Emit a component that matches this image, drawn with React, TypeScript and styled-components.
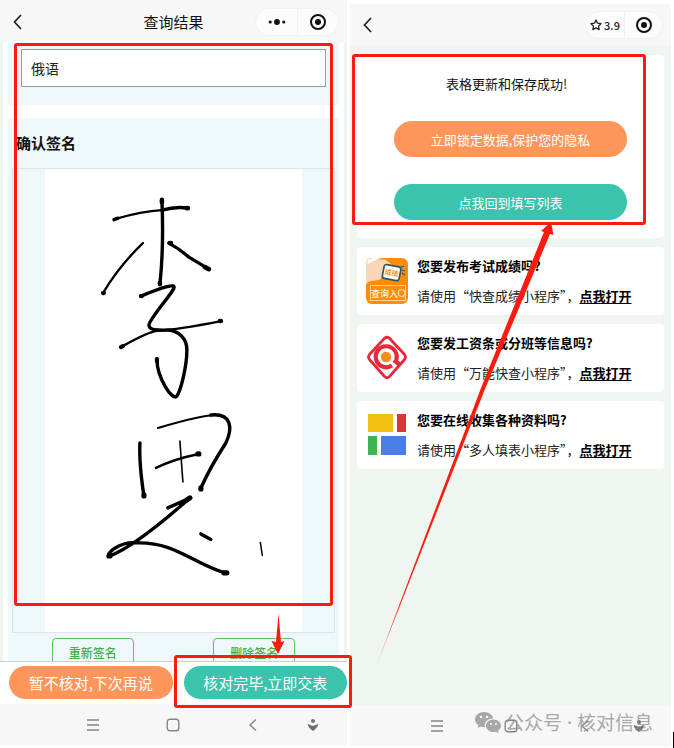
import React from 'react';
import styled, { createGlobalStyle } from 'styled-components';

const RED = '#ff1a0e';

const GlobalStyle = createGlobalStyle`
  * { box-sizing: border-box; }
  body {
    margin: 0;
    background: #fff;
    color: #111;
    font-family: "Noto Sans CJK SC", "Noto Sans", sans-serif;
  }
  button, input { font-family: inherit; }
  h1, h2, p { margin: 0; }
`;

const Page = styled.main`
  position: relative;
  display: grid;
  grid-template-columns: 347fr 321fr;
  gap: 3px;
  padding-right: 3px;
  height: 100vh;
  min-height: 600px;
  overflow: hidden;
`;

const Phone = styled.section<{ $top?: number; $bottom: number }>`
  position: relative;
  display: flex;
  flex-direction: column;
  min-width: 0;
  min-height: 0;
  margin: ${p => p.$top ?? 0}px 0 ${p => p.$bottom}px;
`;

const TopBar = styled.header<{ $height: number }>`
  display: grid;
  grid-template-columns: 1fr auto 1fr;
  align-items: center;
  flex: none;
  height: ${p => p.$height}px;
  padding: 0 8px;
  background: #f7f7f7;
`;

const Title = styled.h1`
  font-size: 15px;
  line-height: 20px;
  font-weight: 400;
`;

const IconButton = styled.button`
  display: flex;
  align-items: center;
  justify-content: center;
  padding: 0;
  border: 0;
  background: none;
  color: inherit;
`;

const BackButton = styled(IconButton)`
  justify-self: start;
  padding: 0 4px;
`;

const Capsule = styled.div<{ $width: number }>`
  justify-self: end;
  grid-column: 3;
  display: grid;
  grid-template-columns: 1fr 1fr;
  width: ${p => p.$width}px;
  height: 28px;
  border: 1px solid #f2f2f2;
  border-radius: 14px;
  background: #fcfcfc;

  button + button { border-left: 1px solid #f0f0f0; }
`;

const Rating = styled(IconButton)`
  gap: 2px;
  color: #222;
  font-size: 11px;
  font-weight: 500;
`;

const FormScroll = styled.div`
  position: relative;
  flex: 1;
  min-height: 0;
  overflow: hidden;
  display: flex;
  flex-direction: column;
  gap: 13px;
  padding: 0 5px;
  border: solid #eff6f0;
  border-width: 0 3px;
`;

const FieldPanel = styled.div`
  flex: none;
  padding: 6px 13px 18px;
  border-radius: 0 0 3px 3px;
  background: #eef7f9;
`;

const TextField = styled.input`
  display: block;
  width: 100%;
  height: 38px;
  padding: 0 9px;
  border: 1px solid #959b9e;
  border-radius: 0;
  background: #fff;
  color: #222;
  font-size: 14px;
`;

const SignPanel = styled.div`
  flex: none;
  padding: 0 4px;
  border-radius: 3px;
  background: #eef7f9;
`;

const SignHeading = styled.h2`
  padding: 14px 4px 15px;
  font-size: 15px;
  line-height: 21px;
  font-weight: 700;
`;

const SignArea = styled.div`
  display: flex;
  justify-content: center;
  height: 465px;
  border: 1px solid #dde4e6;
`;

const SignCanvas = styled.div`
  width: 80%;
  background: #fff;

  svg { display: block; width: 100%; height: 100%; }
`;

const SignActions = styled.div`
  display: flex;
  justify-content: space-around;
  padding: 5px 0;
`;

const OutlineButton = styled.button`
  width: 82px;
  height: 28px;
  padding: 0;
  border: 1px solid #62bf66;
  border-radius: 4px;
  background: transparent;
  color: #43ad48;
  font-size: 12px;
  font-weight: 500;
`;

const SubmitBar = styled.div`
  position: relative;
  flex: none;
  display: flex;
  gap: 11px;
  padding: 4px 0 5px 9px;
  border-top: 1px solid #c9d0cf;
  background: #fff;
`;

const PillButton = styled.button<{ $tone: 'orange' | 'teal'; $large?: boolean }>`
  flex: ${p => (p.$large ? 1 : 'none')};
  width: 100%;
  min-width: 0;
  height: ${p => (p.$large ? 33 : 36)}px;
  padding: 0;
  border: 0;
  border-radius: 18px;
  background: ${p => (p.$tone === 'orange' ? '#fe965c' : '#3bc3ae')};
  color: #fff;
  font-size: ${p => (p.$large ? 15 : 13)}px;
`;

const SystemNav = styled.nav<{ $columns: string; $start: number }>`
  flex: none;
  display: grid;
  grid-template-columns: ${p => p.$columns};
  padding: 0 15px 0 ${p => p.$start}px;
  height: 41px;
  background: #f7f7f7;
  color: #858585;
`;

const ResultBody = styled.div`
  position: relative;
  flex: 1;
  min-height: 0;
  display: flex;
  flex-direction: column;
  gap: 9px;
  padding: 9px 7px;
  background: #eff6f0;
`;

const SuccessCard = styled.div`
  display: flex;
  flex-direction: column;
  align-items: center;
  gap: 27px;
  padding: 19px 37px 18px;
  border-radius: 4px;
  background: #fff;
`;

const SuccessText = styled.p`
  padding-right: 8px;
  font-size: 13px;
  line-height: 20px;
`;

const PromoCard = styled.article`
  display: grid;
  grid-template-columns: 44px 1fr;
  gap: 8px;
  align-items: center;
  height: 68px;
  padding: 0 8px;
  border-radius: 4px;
  background: #fff;

  svg { display: block; }
`;

const PromoText = styled.div`
  display: grid;
  gap: 10px;
  font-size: 13px;
  line-height: 20px;
  white-space: nowrap;
  color: #222;

  h2 { font-size: 13px; font-weight: 700; color: #000; }
  a { color: #000; font-weight: 700; text-underline-offset: 2px; }
`;

const Frame = styled.div<{ $inset: string; $height?: number }>`
  position: absolute;
  z-index: 2;
  inset: ${p => p.$inset};
  ${p => (p.$height ? `height: ${p.$height}px;` : '')}
  border: 3px solid ${RED};
  border-radius: 3px;
  pointer-events: none;
`;

const Arrows = styled.svg`
  position: absolute;
  z-index: 3;
  top: 0;
  left: 0;
  pointer-events: none;
`;

const Watermark = styled.div`
  position: absolute;
  right: 18px;
  bottom: 9px;
  display: flex;
  align-items: center;
  gap: 4px;
  color: #8e8e8e;
  opacity: 0.75;
  font-family: "Noto Sans", "Noto Sans CJK SC", sans-serif;
  font-size: 19px;
  line-height: 28px;
  white-space: nowrap;
`;

const Caret = styled.span`
  position: absolute;
  right: 0;
  bottom: 0;
  width: 1px;
  height: 16px;
  background: #000;
`;

const Chevron = () => (
  <svg width="12" height="18" viewBox="0 0 12 18" fill="none" stroke="#222" strokeWidth="1.7">
    <path d="M9 2 2.5 9 9 16" />
  </svg>
);

const Target = () => (
  <svg width="18" height="18" viewBox="0 0 18 18">
    <circle cx="9" cy="9" r="7" fill="none" stroke="#111" strokeWidth="2" />
    <circle cx="9" cy="9" r="3" fill="#111" />
  </svg>
);

const Dots = () => (
  <svg width="18" height="8" viewBox="0 0 18 8" fill="#111">
    <circle cx="2.2" cy="4" r="1.6" />
    <circle cx="9" cy="4" r="2.9" />
    <circle cx="15.8" cy="4" r="1.6" />
  </svg>
);

const Star = () => (
  <svg width="12" height="12" viewBox="0 0 12 12" fill="none" stroke="#222" strokeWidth="1.3" strokeLinejoin="round">
    <path d="m6 1 1.5 3.2 3.5.5-2.5 2.4.6 3.5L6 8.9l-3.1 1.7.6-3.5L1 4.7l3.5-.5z" />
  </svg>
);

const NavIcons = () => (
  <>
    <IconButton aria-label="菜单">
      <svg width="14" height="14" viewBox="0 0 14 14" stroke="currentColor" strokeWidth="1.3">
        <path d="M1 2h12M1 7h12M1 12h12" />
      </svg>
    </IconButton>
    <IconButton aria-label="主页">
      <svg width="14" height="14" viewBox="0 0 14 14" fill="none" stroke="currentColor" strokeWidth="1.4">
        <rect x="1.2" y="1.2" width="11.6" height="11.6" rx="2.8" />
      </svg>
    </IconButton>
    <IconButton aria-label="后退">
      <svg width="10" height="14" viewBox="0 0 10 14" fill="none" stroke="currentColor" strokeWidth="1.4">
        <path d="M8 1.5 2 7l6 5.5" />
      </svg>
    </IconButton>
    <IconButton aria-label="收起">
      <svg width="12" height="14" viewBox="0 0 12 14" fill="#707070">
        <circle cx="6" cy="3" r="2" />
        <path d="M.5 6 3 6.800q3 2 6 0l2.500-.8Q10.500 10 6 13 1.500 10 .5 6z" />
      </svg>
    </IconButton>
  </>
);

const Signature = () => (
  <svg viewBox="45 169 257 463" fill="none" stroke="#000" strokeLinecap="round" strokeLinejoin="round" strokeWidth="3.400">
    <path strokeWidth="2.300" d="M115 219Q142 211 162 210" />
    <path d="M162 210Q176 206 188 208M114 219.500 118 218" />
    <path d="M162 199Q164 248 160 284" />
    <path strokeWidth="2.300" d="M143 243Q119 266 103 293" />
    <path d="M169 243Q180 249 189 257Q199 263 209 269" />
    <path strokeWidth="4.600" d="M187 208H188M162 200V202M160 283V284M205 267 209 269M170 243H171M220 321H221" />
    <path d="M141 296Q177 281 174 288C172 294 150 318 149 325C149 331 160 330 168 330C179 331 187 338 187 350C187 366 181 390 177 396C173 402 157 378 157 359" />
    <path strokeWidth="2.400" d="M121 347Q144 334 155 331Q181 329 221 321" />
    <path strokeWidth="4.200" d="M121 347 123 346M141 296H142M157 359V361M103 293H104" />
    <path d="M140 443Q139 463 144 496" />
    <path strokeWidth="2.200" d="M158 428Q202 415 217 415" />
    <path d="M211 415C232 413 233 428 226 443Q211 466 201 488" />
    <path strokeWidth="2.400" d="M156 468Q174 459 199 454" />
    <path strokeWidth="1.600" d="M180 441 183 482" />
    <path d="M168 508 190 498Q136 546 110 556C104 555 120 541 137 543C176 542 193 564 225 573" />
    <path strokeWidth="5.200" d="M187 500 190 498M224 573 227 573M109 556H110M201 488V489M198 454H199M144 495V496" />
    <path d="M201 534 211 539.500" />
    <path strokeWidth="1.500" d="M260.500 542.500 262.500 555.500" />
  </svg>
);

const ScoreLogo = () => (
  <svg width="44" height="48" viewBox="0 0 44 48">
    <rect x="1" y="1" width="42" height="46" rx="6" fill="#ff8d09" />
    <path d="M1 9Q3 5 7 2.500H20L29 9 24 14Q18 19 14 23L6 24Q1 25 1 29z" fill="#fbd5b8" />
    <path d="M1 8Q2 1 8 1H16L9 4z" fill="#fff" />
    <g transform="rotate(11 26 16)">
      <rect x="18" y="8.500" width="17" height="14" rx="2.500" fill="#fff" stroke="#29586b" strokeWidth="1.700" />
      <text x="26.500" y="18.200" textAnchor="middle" fontSize="7" fontWeight="700" fill="#ef9a32">成绩</text>
    </g>
    <path d="m36 10 3-1M37 13l3 1M37 16l3 2" stroke="#29586b" strokeWidth="1.200" />
    <rect x="5.500" y="28.500" width="35" height="15" fill="none" stroke="#ffd49c" strokeWidth="1" />
    <text x="6" y="40" fontSize="9" fontWeight="500" fill="#fff2dc">查询入</text>
    <circle cx="36.500" cy="36" r="3.500" fill="none" stroke="#fff2dc" />
    <path d="m38 39 3.500 4" stroke="#ffc84a" strokeWidth="1.500" />
  </svg>
);

const QueryLogo = () => (
  <svg width="44" height="48" viewBox="0 0 44 48" fill="none" stroke="#e9293a">
    <path d="M19.500 4.300Q22 2.200 24.500 4.300L39.500 20.500Q41.500 23 39.500 25.500L24.500 42.500Q22 44.700 19.500 42.500L4.500 25.500Q2.500 23 4.500 20.500z" strokeWidth="2.800" />
    <path d="M27 31.500A10.500 10.500 0 1 1 31.200 26" strokeWidth="4.200" />
    <path d="M29 26 35 31" strokeWidth="4.500" />
    <circle cx="21" cy="23" r="5.200" fill="#f28c1b" stroke="none" />
  </svg>
);

const FormLogo = () => (
  <svg width="44" height="48" viewBox="0 0 44 48">
    <path fill="#f2c011" d="M3 3h25v18H3z" />
    <path fill="#dc3338" d="M32 3h9v18h-9z" />
    <path fill="#3eb455" d="M3 25h9v19H3z" />
    <path fill="#4a80e6" d="M16 25h25v19H16z" />
  </svg>
);

const WeChatLogo = () => (
  <svg width="26" height="24" viewBox="0 0 26 24">
    <path fill="#8e8e8e" d="M9 1C4 1 0 4.300 0 8.500c0 2.400 1.300 4.400 3.400 5.800L2.500 17l3.200-1.600c1.400.4 2.800.6 4.300.5C8.700 11 13 7.200 18.200 7.400 17.300 3.700 13.500 1 9 1z" />
    <path fill="#8e8e8e" d="M26 14.800c0-3.500-3.400-6.300-7.500-6.300S11 11.300 11 14.800s3.400 6.300 7.500 6.300c.9 0 1.800-.1 2.600-.4l2.500 1.500-.7-2.400c1.900-1.200 3.100-3 3.100-5z" />
    <g fill="#f7f7f7">
      <circle cx="6" cy="6" r="1.300" />
      <circle cx="12" cy="6" r="1.300" />
      <circle cx="16" cy="13" r="1.100" />
      <circle cx="21" cy="13" r="1.100" />
    </g>
  </svg>
);

const promos = [
  { Logo: ScoreLogo, title: '您要发布考试成绩吗?', name: '快查成绩小程序' },
  { Logo: QueryLogo, title: '您要发工资条或分班等信息吗?', name: '万能快查小程序' },
  { Logo: FormLogo, title: '您要在线收集各种资料吗?', name: '多人填表小程序' },
];

export default function App() {
  return (
    <>
      <GlobalStyle />
      <Page>
        <Phone $bottom={3}>
          <TopBar $height={43}>
            <BackButton aria-label="返回"><Chevron /></BackButton>
            <Title>查询结果</Title>
            <Capsule $width={84}>
              <IconButton aria-label="更多"><Dots /></IconButton>
              <IconButton aria-label="关闭"><Target /></IconButton>
            </Capsule>
          </TopBar>
          <FormScroll>
            <FieldPanel>
              <TextField aria-label="语种" defaultValue="俄语" />
            </FieldPanel>
            <SignPanel>
              <SignHeading>确认签名</SignHeading>
              <SignArea>
                <SignCanvas><Signature /></SignCanvas>
              </SignArea>
              <SignActions>
                <OutlineButton>重新签名</OutlineButton>
                <OutlineButton>删除签名</OutlineButton>
              </SignActions>
            </SignPanel>
            <Frame $inset="0 11px auto 11px" $height={563} />
          </FormScroll>
          <SubmitBar>
            <PillButton $tone="orange" $large>暂不核对,下次再说</PillButton>
            <PillButton $tone="teal" $large>核对完毕,立即交表</PillButton>
            <Frame $inset="-7px -5px -4px 50%" />
          </SubmitBar>
          <SystemNav $columns="80fr 80fr 80fr 39fr" $start={53}><NavIcons /></SystemNav>
        </Phone>

        <Phone $top={4} $bottom={2}>
          <TopBar $height={42}>
            <BackButton aria-label="返回"><Chevron /></BackButton>
            <Capsule $width={78}>
              <Rating><Star />3.9</Rating>
              <IconButton aria-label="关闭"><Target /></IconButton>
            </Capsule>
          </TopBar>
          <ResultBody>
            <SuccessCard>
              <SuccessText>表格更新和保存成功!</SuccessText>
              <PillButton $tone="orange">立即锁定数据,保护您的隐私</PillButton>
              <PillButton $tone="teal">点我回到填写列表</PillButton>
            </SuccessCard>
            {promos.map(({ Logo, title, name }) => (
              <PromoCard key={name}>
                <Logo />
                <PromoText>
                  <h2>{title}</h2>
                  <p>请使用“{name}”，<a href="#open">点我打开</a></p>
                </PromoText>
              </PromoCard>
            ))}
            <Frame $inset="8px 25px auto 2px" $height={171} />
          </ResultBody>
          <SystemNav $columns="74fr 74fr 74fr 34fr" $start={50}><NavIcons /></SystemNav>
          <Watermark><WeChatLogo />公众号 · 核对信息</Watermark>
        </Phone>

        <Arrows width="674" height="748" viewBox="0 0 674 748" fill={RED}>
          <defs>
            <linearGradient id="tail" gradientUnits="userSpaceOnUse" x1="374" y1="672" x2="400" y2="606">
              <stop offset="0" stopColor={RED} stopOpacity="0.2" />
              <stop offset="1" stopColor={RED} />
            </linearGradient>
          </defs>
          <path d="M278.500 614 281 642 284.500 641 278 654 271.500 641 276 642z" />
          <path fill="url(#tail)" d="M374 672 481 388 544 232 541 231 551 222 553.500 235 550 234 485 389z" />
        </Arrows>
        <Caret />
      </Page>
    </>
  );
}
